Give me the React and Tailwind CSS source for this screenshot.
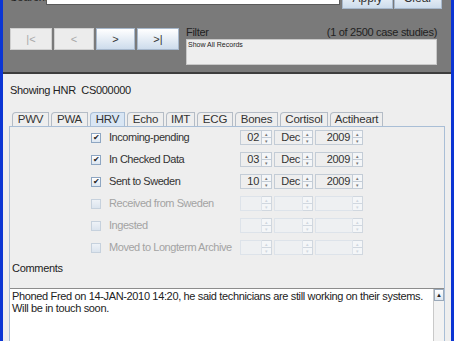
import React from "react";

const font = { fontFamily: '"Liberation Sans", Arial, sans-serif' };

function NavButton({ label, enabled, w }) {
  return (
    <div
      className={`flex h-[22px] items-center justify-center border text-[11px] ${w} ${
        enabled
          ? "border-[#a7b8cc] bg-gradient-to-b from-[#ffffff] to-[#cddcec] text-[#333]"
          : "border-[#cfcfcf] bg-[#ececec] text-[#a8a8a8]"
      }`}
    >
      {label}
    </div>
  );
}

function Spin({ value, w, disabled }) {
  return (
    <div className="flex h-[15px]">
      <div
        className={`flex ${w} items-center justify-end border pr-[2px] text-[11px] leading-none tracking-[-0.3px] ${
          disabled
            ? "border-[#dde3ea] bg-[#eef0f2] text-transparent"
            : "border-[#c3ccd6] bg-[#eeeeee] text-[#333]"
        }`}
      >
        {value}
      </div>
      <div
        className={`flex w-[10px] flex-col border border-l-0 ${
          disabled ? "border-[#d0d7df]" : "border-[#c3ccd6]"
        }`}
      >
        <div
          className={`flex flex-1 items-center justify-center border-b text-[5px] leading-none ${
            disabled ? "border-[#d0d7df] text-[#d0d7df]" : "border-[#c3ccd6] text-[#777]"
          } bg-[#f4f6f8]`}
        >
          ▴
        </div>
        <div
          className={`flex flex-1 items-center justify-center text-[5px] leading-none ${
            disabled ? "text-[#d0d7df]" : "text-[#777]"
          } bg-[#f4f6f8]`}
        >
          ▾
        </div>
      </div>
    </div>
  );
}

function StatusRow({ label, checked, disabled, day, month, year }) {
  return (
    <div className="flex h-[15px] items-center">
      <div className="ml-[81px] flex w-[149px] items-center">
        <div
          className={`flex h-[10px] w-[10px] shrink-0 items-center justify-center border text-[8px] leading-none ${
            disabled
              ? "border-[#c6d1dd] bg-gradient-to-b from-[#eef2f7] to-[#dbe4ee]"
              : "border-[#8ea6c2] bg-gradient-to-b from-[#ffffff] to-[#dce6f1] text-[#222]"
          }`}
        >
          {checked ? "✔" : ""}
        </div>
        <span
          className={`ml-[8px] whitespace-nowrap text-[11px] leading-none tracking-[-0.45px] ${
            disabled ? "text-[#a3a3a3]" : "text-[#333]"
          }`}
        >
          {label}
        </span>
      </div>
      <div className="flex gap-[2px]">
        <Spin value={day} w="w-[22px]" disabled={disabled} />
        <Spin value={month} w="w-[29px]" disabled={disabled} />
        <Spin value={year} w="w-[38px]" disabled={disabled} />
      </div>
    </div>
  );
}

const tabs = [
  ["PWV", "w-[37px]"],
  ["PWA", "w-[37px]"],
  ["HRV", "w-[35px]"],
  ["Echo", "w-[37px]"],
  ["IMT", "w-[29px]"],
  ["ECG", "w-[36px]"],
  ["Bones", "w-[43px]"],
  ["Cortisol", "w-[48px]"],
  ["Actiheart", "w-[53px]"],
];

export default function App() {
  return (
    <div
      className="flex h-[341px] w-[454px] overflow-hidden border-x-[3px] border-[#0b35d4] bg-[#eeeeee]"
      style={font}
    >
      <div className="flex w-full flex-col">
        {/* top grey panel */}
        <div className="h-[74px] shrink-0 border-b-2 border-[#3d3d3d] bg-[#7a7a7a]">
          <div className="mt-[-13px] flex h-[22px] items-start">
            <span className="ml-[7px] w-[36px] pt-[2px] text-[11px] text-[#222]">Search:</span>
            <div className="h-[18px] w-[294px] border border-[#5a5a5a] bg-white" />
            <div className="ml-[2px] flex h-[22px] w-[51px] items-center justify-center border border-[#a7b8cc] bg-gradient-to-b from-[#ffffff] to-[#cddcec] text-[12px] text-[#333]">
              Apply
            </div>
            <div className="ml-[1px] flex h-[22px] w-[48px] items-center justify-center border border-[#a7b8cc] bg-gradient-to-b from-[#ffffff] to-[#cddcec] text-[12px] text-[#333]">
              Clear
            </div>
          </div>
          <div className="mt-[16px] flex items-start">
            <div className="ml-[7px] mt-[3px] flex gap-[2px]">
              <NavButton label="|<" w="w-[42px]" />
              <NavButton label="<" w="w-[40px]" />
              <NavButton label=">" w="w-[39px]" enabled />
              <NavButton label=">|" w="w-[42px]" enabled />
            </div>
            <div className="ml-[7px] flex w-[251px] flex-col">
              <div className="flex h-[14px] items-center justify-between text-[11px] tracking-[-0.3px] text-[#222]">
                <span>Filter</span>
                <span>(1 of 2500 case studies)</span>
              </div>
              <div className="h-[26px] border border-[#c8c8c8] bg-[#eeeeee] pl-[1px] pt-[1px] text-[7px] leading-none text-[#222]">
                Show All Records
              </div>
            </div>
          </div>
        </div>

        {/* lower area */}
        <div className="flex flex-1 flex-col pl-[6px] pr-[6px]">
          <div className="mt-[9px] h-[14px] whitespace-nowrap pl-[1px] text-[11px] leading-[14px] tracking-[-0.3px] text-[#222]">
            Showing HNR&nbsp;&nbsp;CS000000
          </div>
          <div className="mt-[15px] flex gap-[2px] pl-[3px]">
            {tabs.map(([t, w]) => (
              <div
                key={t}
                className={`flex h-[14px] items-center justify-center rounded-tl-[4px] border border-b-0 text-[11.5px] leading-none tracking-[-0.2px] text-[#333] ${w} ${
                  t === "HRV"
                    ? "border-[#a9bed6] bg-[#d9e6f4]"
                    : "border-[#b4bcc6] bg-[#eeeeee]"
                }`}
              >
                {t}
              </div>
            ))}
          </div>
          <div className="flex flex-1 flex-col border border-b-0 border-[#a9bed6] bg-[#eeeeee]">
            <div className="mt-[3px] flex flex-col gap-[7px]">
              <StatusRow label="Incoming-pending" checked day="02" month="Dec" year="2009" />
              <StatusRow label="In Checked Data" checked day="03" month="Dec" year="2009" />
              <StatusRow label="Sent to Sweden" checked day="10" month="Dec" year="2009" />
              <StatusRow label="Received from Sweden" disabled />
              <StatusRow label="Ingested" disabled />
              <StatusRow label="Moved to Longterm Archive" disabled />
            </div>
            <div className="mt-[6px] h-[14px] pl-[2px] text-[11px] leading-[14px] tracking-[-0.3px] text-[#222]">
              Comments
            </div>
            <div className="mt-[13px] flex flex-1 border-t border-[#8c8c8c] bg-white">
              <div className="flex-1 whitespace-nowrap pl-[2px] pt-[1px] text-[11px] leading-[12px] tracking-[-0.35px] text-[#222]">
                Phoned Fred on 14-JAN-2010 14:20, he said technicians are still working on their systems.
                <br />
                Will be in touch soon.
              </div>
              <div className="flex w-[11px] flex-col border-l border-[#c9c9c9] bg-[#f2f2f2]">
                <div className="flex h-[12px] items-center justify-center border border-[#9aa9ba] bg-gradient-to-b from-[#ffffff] to-[#dde6ef] text-[6px] leading-none text-[#222]">
                  ▲
                </div>
              </div>
            </div>
          </div>
        </div>
      </div>
    </div>
  );
}
